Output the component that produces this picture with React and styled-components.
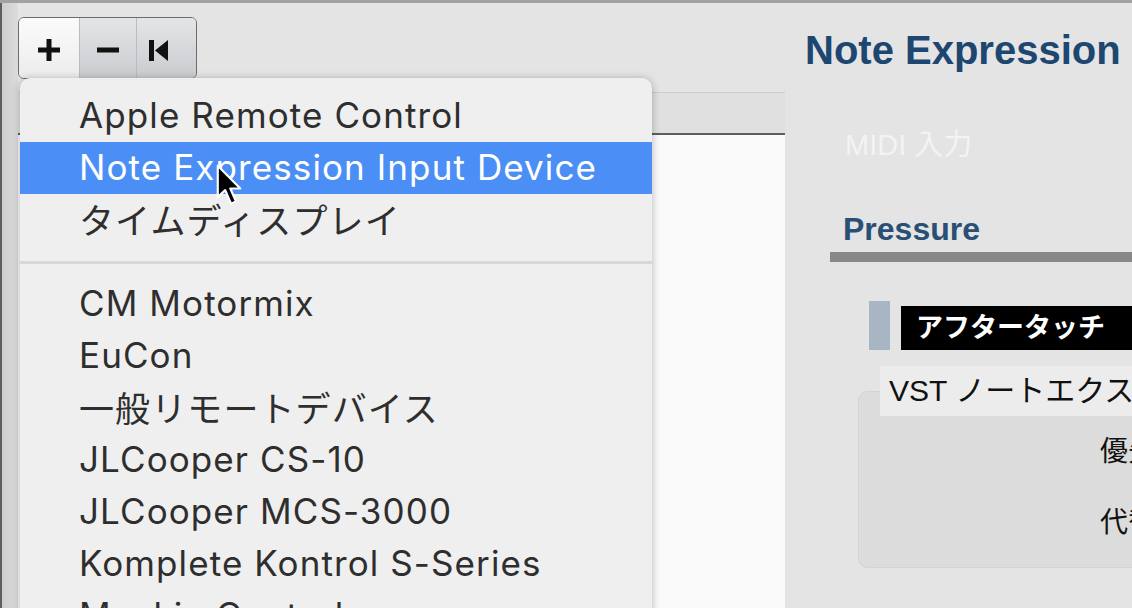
import styled, { createGlobalStyle } from "styled-components";

const GlobalStyle = createGlobalStyle`
  html, body {
    margin: 0;
    padding: 0;
  }
  body {
    width: 1132px;
    height: 608px;
    overflow: hidden;
    background: #e4e4e4;
    font-family: "Liberation Sans", "Noto Sans CJK JP", sans-serif;
  }
`;

const menuItems = [
  { label: "Apple Remote Control" },
  { label: "Note Expression Input Device", selected: true },
  { label: "タイムディスプレイ" },
  { separator: true },
  { label: "CM Motormix" },
  { label: "EuCon" },
  { label: "一般リモートデバイス" },
  { label: "JLCooper CS-10" },
  { label: "JLCooper MCS-3000" },
  { label: "Komplete Kontrol S-Series" },
  { label: "Mackie Control" },
];

function PlusIcon() {
  return (
    <svg width="22" height="22" viewBox="0 0 22 22">
      <rect x="8.5" y="0" width="5" height="22" fill="#111" />
      <rect x="0" y="8.5" width="22" height="5" fill="#111" />
    </svg>
  );
}

function MinusIcon() {
  return (
    <svg width="22" height="6" viewBox="0 0 22 6">
      <rect x="0" y="0.5" width="22" height="5" fill="#111" />
    </svg>
  );
}

function SkipBackIcon() {
  return (
    <svg width="20" height="21" viewBox="0 0 20 21">
      <rect x="0" y="0" width="5" height="21" fill="#111" />
      <polygon points="19,0 19,21 6,10.5" fill="#111" />
    </svg>
  );
}

function Cursor() {
  return (
    <CursorArrow width="30" height="43" viewBox="0 0 18 26">
      <path
        d="M1 1 L1 20 L5.5 15.8 L9 24 L12 22.7 L8.6 14.8 L14.6 14.8 Z"
        fill="#000"
        stroke="#fff"
        strokeWidth="1.3"
        strokeLinejoin="round"
      />
    </CursorArrow>
  );
}

export default function App() {
  return (
    <>
      <GlobalStyle />
      <Page>
        <LeftEdge />
        <LeftPanel>
          <Toolbar>
            <ButtonGroup>
              <Segment $light $width={60}>
                <PlusIcon />
              </Segment>
              <Segment $width={57}>
                <MinusIcon />
              </Segment>
              <Segment $width={60} $shift={16}>
                <SkipBackIcon />
              </Segment>
            </ButtonGroup>
          </Toolbar>
          <HeaderStrip />
          <DeviceList />
        </LeftPanel>

        <RightPanel>
          <Title>Note Expression</Title>
          <MidiLabel>MIDI 入力</MidiLabel>
          <SectionTitle>Pressure</SectionTitle>
          <SectionBar />
          <ParamRow>
            <ParamMarker />
            <ParamLabel>アフタータッチ</ParamLabel>
          </ParamRow>
          <ParamBox>
            <ParamLegend>VST ノートエクスプレッションパラメーター</ParamLegend>
            <ParamField>優先パラメーター</ParamField>
            <ParamField>代替パラメーター</ParamField>
          </ParamBox>
        </RightPanel>

        <Menu>
          {menuItems.map((item, i) =>
            item.separator ? (
              <Separator key={i} />
            ) : (
              <MenuItem key={i} $selected={item.selected}>
                {item.label}
              </MenuItem>
            )
          )}
        </Menu>
        <Cursor />
      </Page>
    </>
  );
}

const Page = styled.div`
  position: relative;
  display: flex;
  width: 1132px;
  height: 608px;
  box-sizing: border-box;
  border-top: 3px solid #a2a2a2;
  overflow: hidden;
  background: #e4e4e4;
`;

const LeftEdge = styled.div`
  width: 18px;
  flex-shrink: 0;
  background: linear-gradient(
    to right,
    #5e5e5e 0,
    #5e5e5e 2px,
    #cdcdcd 2px,
    #dcdcdc 18px
  );
`;

const LeftPanel = styled.div`
  width: 767px;
  flex-shrink: 0;
  display: flex;
  flex-direction: column;
`;

const Toolbar = styled.div`
  height: 89px;
  box-sizing: border-box;
  padding-top: 14px;
  display: flex;
  align-items: flex-start;
`;

const ButtonGroup = styled.div`
  display: flex;
  height: 60px;
  border: 1px solid #6c6c6c;
  border-radius: 6px;
  overflow: hidden;
`;

const Segment = styled.button`
  width: ${(p) => p.$width}px;
  height: 100%;
  padding: 4px ${(p) => p.$shift || 0}px 0 0;
  border: none;
  border-left: 1px solid #b9bcc0;
  display: flex;
  align-items: center;
  justify-content: center;
  background: ${(p) =>
    p.$light
      ? "linear-gradient(#fbfbfb, #ececec)"
      : "linear-gradient(#e3e5e7, #c9cbcf)"};
  &:first-child {
    border-left: none;
  }
`;

const HeaderStrip = styled.div`
  height: 40px;
  background: #e0e0e0;
  border-top: 1px solid #cdcdcd;
  border-bottom: 2px solid #5e5e5e;
`;

const DeviceList = styled.div`
  flex: 1;
  background: #fafafa;
`;

const RightPanel = styled.div`
  flex: 1;
  min-width: 0;
  padding-left: 20px;
  display: flex;
  flex-direction: column;
  overflow: hidden;
  white-space: nowrap;
`;

const Title = styled.div`
  margin-top: 24px;
  font-size: 40px;
  line-height: 46px;
  font-weight: bold;
  color: #1d4670;
`;

const MidiLabel = styled.div`
  margin-top: 55px;
  padding-left: 40px;
  font-size: 29px;
  line-height: 34px;
  color: #f1f4f2;
`;

const SectionTitle = styled.div`
  margin-top: 49px;
  padding-left: 38px;
  font-size: 32px;
  line-height: 36px;
  font-weight: bold;
  color: #2a4f74;
`;

const SectionBar = styled.div`
  margin-top: 5px;
  margin-left: 25px;
  height: 10px;
  background: #878787;
`;

const ParamRow = styled.div`
  margin-top: 39px;
  margin-left: 64px;
  display: flex;
  align-items: flex-end;
  gap: 11px;
`;

const ParamMarker = styled.div`
  flex-shrink: 0;
  width: 21px;
  height: 49px;
  background: #a8b6c4;
`;

const ParamLabel = styled.div`
  flex-shrink: 0;
  width: 300px;
  height: 44px;
  padding-left: 15px;
  box-sizing: border-box;
  background: #000;
  color: #fff;
  font-size: 27px;
  line-height: 44px;
  font-weight: bold;
`;

const ParamBox = styled.fieldset`
  margin: 16px 0 0 53px;
  width: 380px;
  padding: 0 0 9px 21px;
  border: 1px solid #d3d3d3;
  border-radius: 10px;
  background: #dcdcdc;
  box-sizing: border-box;
`;

const ParamLegend = styled.legend`
  height: 50px;
  padding: 0 0 0 9px;
  background: #ececec;
  font-size: 30px;
  line-height: 50px;
  color: #111;
  width: 320px;
`;

const ParamField = styled.div`
  height: 71px;
  padding-left: 220px;
  font-size: 28px;
  line-height: 71px;
  color: #111;
`;

const Menu = styled.div`
  position: absolute;
  left: 20px;
  top: 75px;
  width: 632px;
  height: 600px;
  padding-top: 12px;
  box-sizing: border-box;
  background: #efefef;
  border-radius: 10px 10px 0 0;
  box-shadow: 0 1px 8px rgba(0, 0, 0, 0.28);
  font-family: Inter, "Noto Sans CJK JP", sans-serif;
`;

const MenuItem = styled.div`
  height: 52px;
  box-sizing: border-box;
  padding: 0 0 3px 59px;
  display: flex;
  align-items: center;
  font-size: 35px;
  letter-spacing: 1.1px;
  color: ${(p) => (p.$selected ? "#fff" : "#2e2e2e")};
  background: ${(p) => (p.$selected ? "#4b8ff6" : "transparent")};
  white-space: nowrap;
`;

const Separator = styled.div`
  height: 32px;
  display: flex;
  align-items: center;
  &::after {
    content: "";
    flex: 1;
    height: 3px;
    background: #d8d8d8;
  }
`;

const CursorArrow = styled.svg`
  position: absolute;
  left: 216px;
  top: 161px;
`;
